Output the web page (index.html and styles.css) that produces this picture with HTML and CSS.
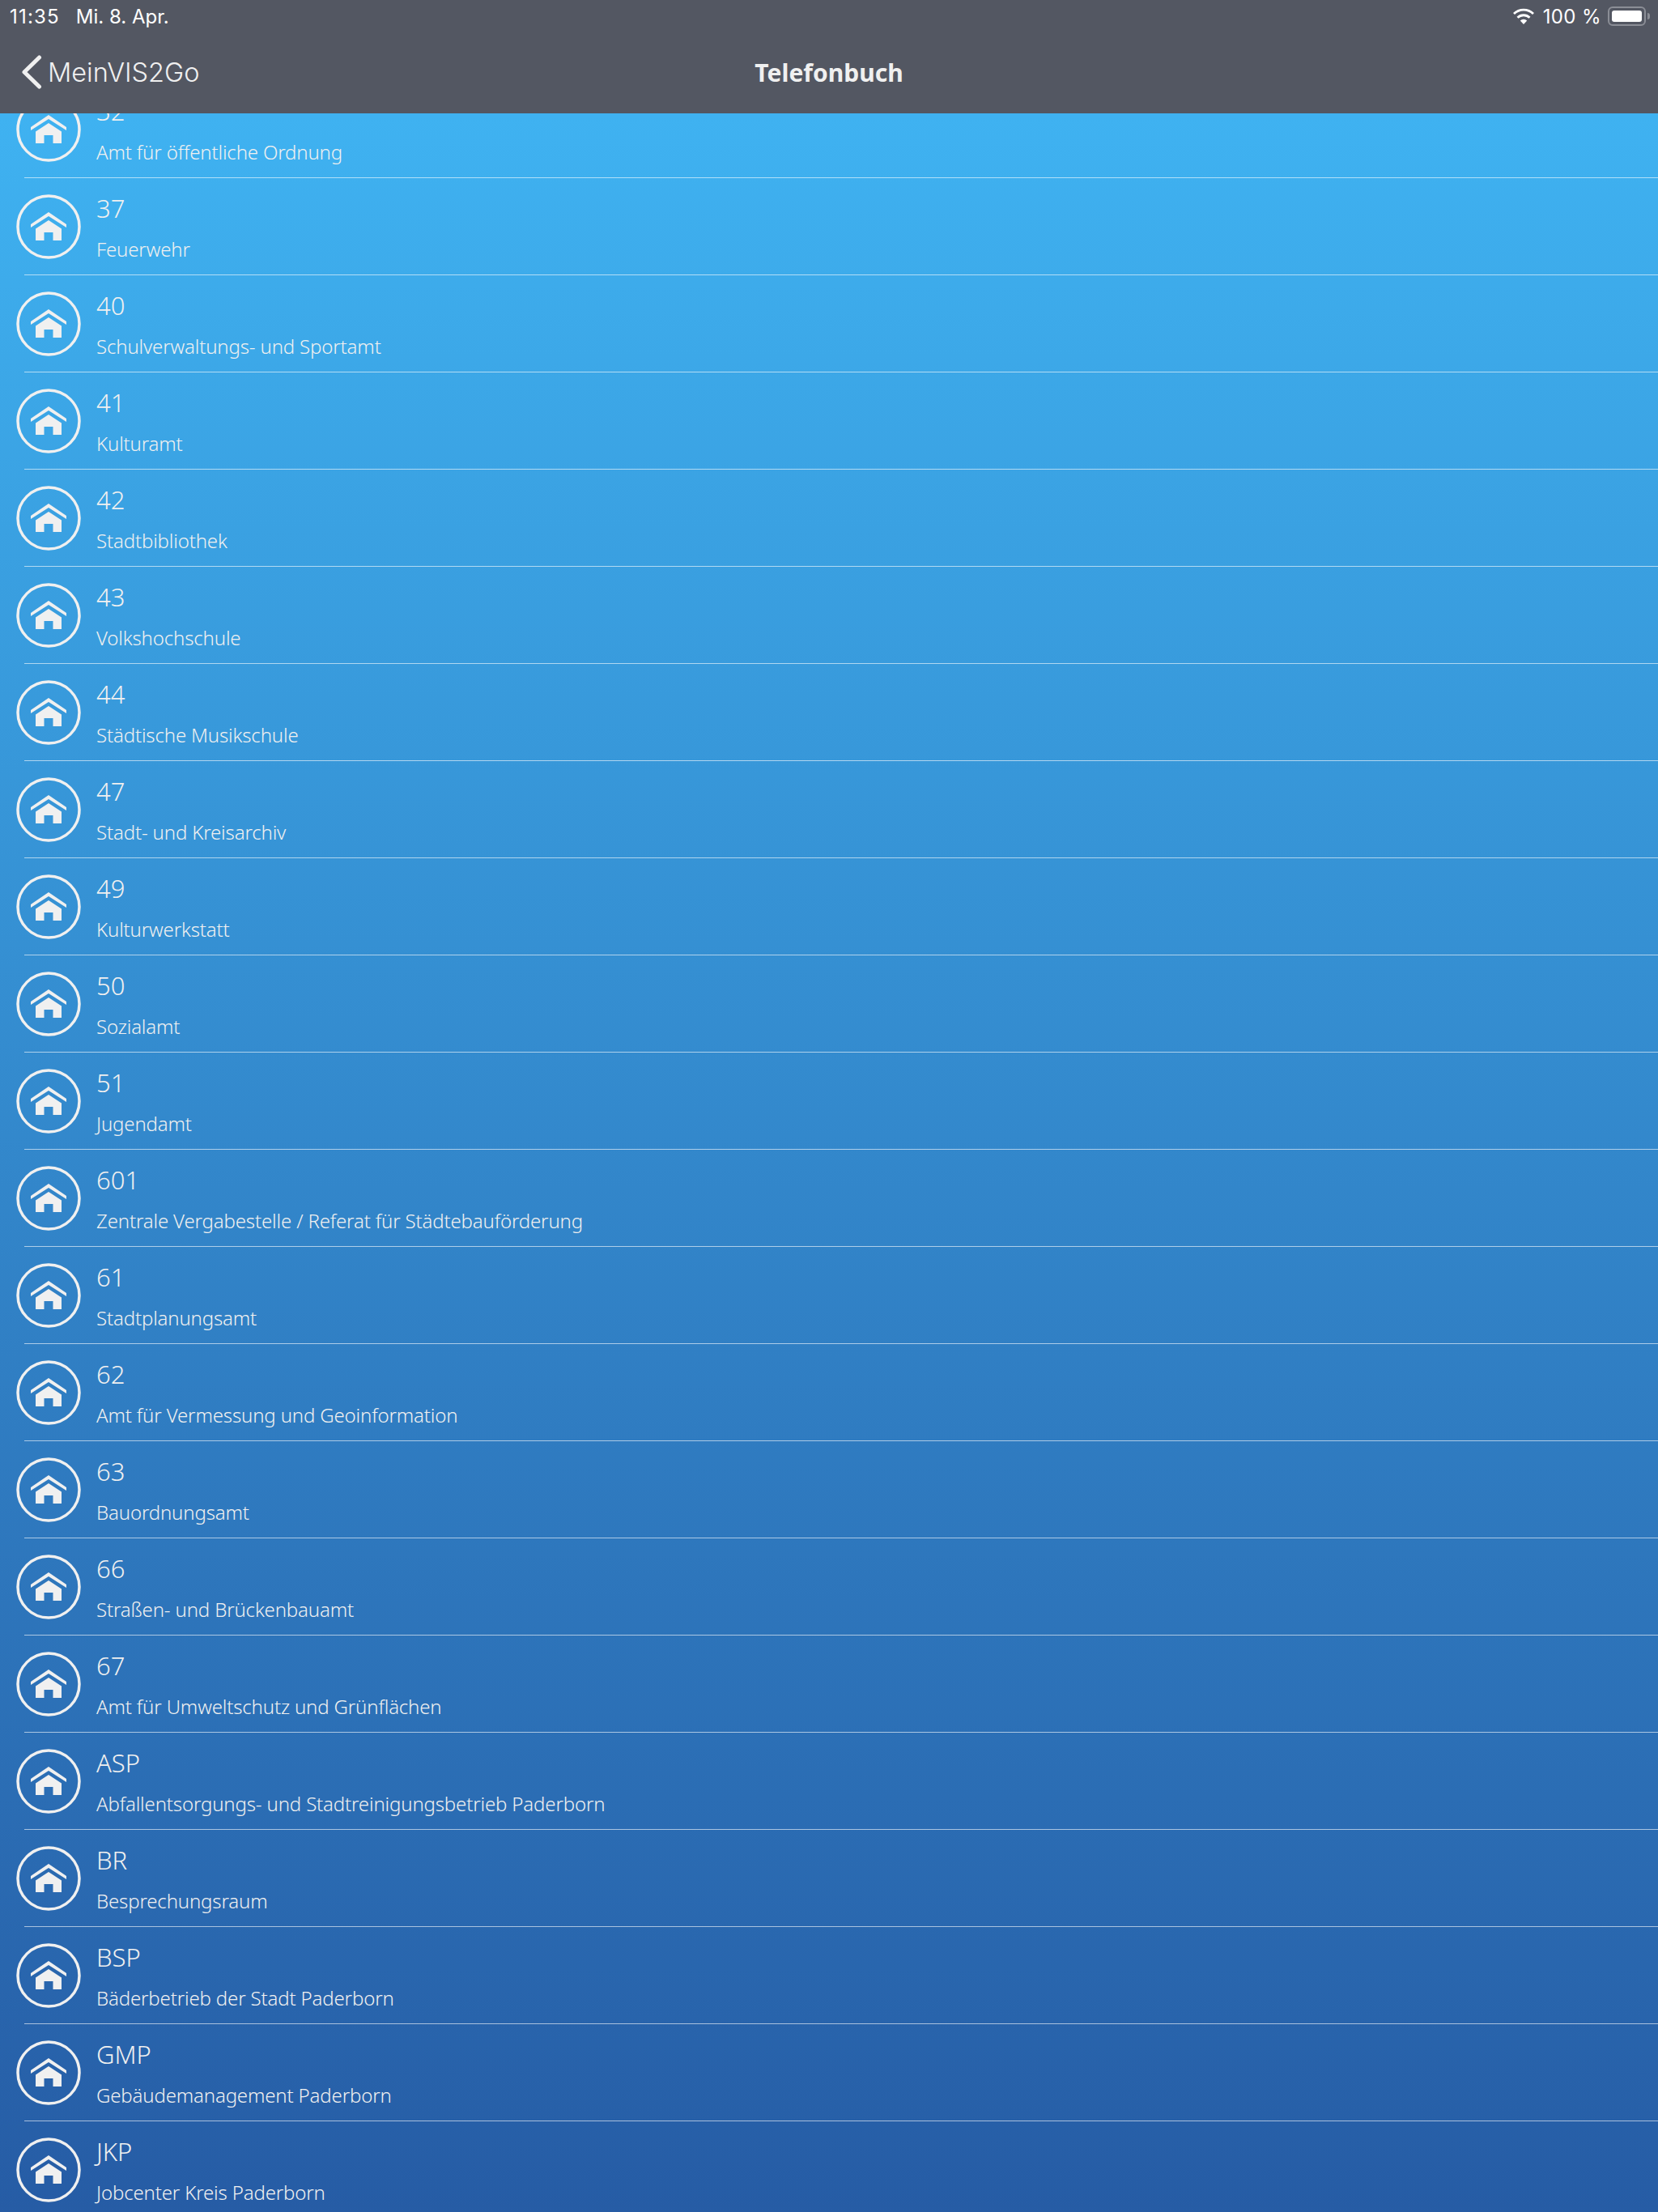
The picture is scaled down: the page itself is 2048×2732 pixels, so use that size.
FILE: index.html
```html
<!DOCTYPE html>
<html lang="de">
<head>
    <meta charset="UTF-8">
    <meta name="viewport" content="width=device-width, initial-scale=1.0">
    <title>Telefonbuch</title>
    <link rel="stylesheet" href="styles.css">
</head>
<body>
    <svg class="icon-defs" width="0" height="0">
        <symbol id="house" viewBox="0 0 80 80">
            <circle cx="40" cy="40" r="38" fill="none" stroke="#f0f0f0" stroke-width="3.500"/>
            <path d="M18 37 L40 22 L62 37 V41 L40 27 L18 41 Z" fill="#f0f0f0"/>
            <path d="M24 42.500 L40 32 L56 42.500 V57 H45.500 V47 H34.500 V57 H24 Z" fill="#f0f0f0"/>
        </symbol>
    </svg>

    <div class="app">
        <div class="top-bar">
            <div class="status-bar">
                <div class="status-left">
                    <span class="status-time">11:35</span>
                    <span>Mi. 8. Apr.</span>
                </div>
                <div class="status-right">
                    <svg class="wifi" viewBox="0 0 28 20">
                        <path d="M14 20 L9.800 15.400 A6 6 0 0 1 18.200 15.400 Z" fill="#fff"/>
                        <path d="M6.500 11.800 A10.800 10.800 0 0 1 21.500 11.800" fill="none" stroke="#fff" stroke-width="2.800"/>
                        <path d="M2 7 A17 17 0 0 1 26 7" fill="none" stroke="#fff" stroke-width="2.800"/>
                    </svg>
                    <span class="status-level">100 %</span>
                    <div class="battery"><div class="battery-level"></div></div>
                    <div class="battery-tip"></div>
                </div>
            </div>
            <div class="nav-bar">
                <div class="nav-back">
                    <svg class="chevron" viewBox="0 0 26 42">
                        <path d="M22.500 3 L4 21 L22.500 39" fill="none" stroke="#f0f0f0" stroke-width="5" stroke-linecap="round" stroke-linejoin="round"/>
                    </svg>
                    <span>MeinVIS2Go</span>
                </div>
                <div class="nav-title">Telefonbuch</div>
            </div>
        </div>

        <div class="content">
            <div id="list" class="phone-list"></div>
        </div>
    </div>

    <script>
        const entries = [
            ["32", "Amt für öffentliche Ordnung"],
            ["37", "Feuerwehr"],
            ["40", "Schulverwaltungs- und Sportamt"],
            ["41", "Kulturamt"],
            ["42", "Stadtbibliothek"],
            ["43", "Volkshochschule"],
            ["44", "Städtische Musikschule"],
            ["47", "Stadt- und Kreisarchiv"],
            ["49", "Kulturwerkstatt"],
            ["50", "Sozialamt"],
            ["51", "Jugendamt"],
            ["601", "Zentrale Vergabestelle / Referat für Städtebauförderung"],
            ["61", "Stadtplanungsamt"],
            ["62", "Amt für Vermessung und Geoinformation"],
            ["63", "Bauordnungsamt"],
            ["66", "Straßen- und Brückenbauamt"],
            ["67", "Amt für Umweltschutz und Grünflächen"],
            ["ASP", "Abfallentsorgungs- und Stadtreinigungsbetrieb Paderborn"],
            ["BR", "Besprechungsraum"],
            ["BSP", "Bäderbetrieb der Stadt Paderborn"],
            ["GMP", "Gebäudemanagement Paderborn"],
            ["JKP", "Jobcenter Kreis Paderborn"]
        ];

        document.getElementById('list').innerHTML = entries.map(entry => `
            <div class="phone-row">
                <svg class="row-icon"><use href="#house"/></svg>
                <div class="row-text">
                    <div class="row-code">${entry[0]}</div>
                    <div class="row-name">${entry[1]}</div>
                </div>
            </div>
        `).join('');
    </script>
</body>
</html>
```

FILE: styles.css
```css
* {
    margin: 0;
    padding: 0;
    box-sizing: border-box;
}

body {
    font-family: "Noto Sans", sans-serif;
    color: #f0f0f0;
    background: #265ca5;
    height: 2732px;
    overflow: hidden;
}

.icon-defs {
    display: block;
    height: 0;
}

.app {
    display: flex;
    flex-direction: column;
    height: 2732px;
}

.top-bar {
    flex: 0 0 140px;
    background: #535762;
}

.status-bar {
    height: 40px;
    padding: 0 10px 0 12px;
    display: flex;
    justify-content: space-between;
    align-items: center;
    font-family: Inter, sans-serif;
    font-size: 24px;
    color: #fff;
}

.status-time {
    letter-spacing: 1.2px;
}

.status-level {
    letter-spacing: 0.4px;
}

.status-left {
    display: flex;
    gap: 20px;
}

.status-right {
    display: flex;
    align-items: center;
}

.wifi {
    width: 28px;
    height: 20px;
    margin-right: 10px;
}

.battery {
    width: 47px;
    height: 24px;
    margin-left: 8px;
    padding: 3px;
    border: 2px solid #8b8e96;
    border-radius: 6px;
}

.battery-level {
    height: 100%;
    background: #fff;
    border-radius: 3px;
}

.battery-tip {
    width: 3px;
    height: 8px;
    margin-left: 2px;
    background: #8b8e96;
    border-radius: 0 3px 3px 0;
}

.nav-bar {
    height: 100px;
    padding: 0 24px 10px 26px;
    display: flex;
    align-items: center;
    position: relative;
}

.nav-back {
    display: flex;
    align-items: center;
    gap: 7px;
    font-family: Inter, sans-serif;
    font-size: 32.500px;
    font-weight: 300;
    margin-top: 8px;
}

.chevron {
    width: 26px;
    height: 42px;
}

.nav-title {
    position: absolute;
    left: 0;
    right: 0;
    top: 29px;
    text-align: center;
    font-size: 30px;
    font-weight: 700;
}

.content {
    flex: 1;
    overflow: hidden;
    background: linear-gradient(180deg, #3fb2f1 0%, #265ca5 100%);
}

.phone-list {
    margin-top: -40px;
}

.phone-row {
    height: 120px;
    padding: 20px 0 0 20px;
    display: flex;
    gap: 19px;
    position: relative;
}

.phone-row::after {
    content: '';
    position: absolute;
    left: 30px;
    right: 0;
    bottom: 0;
    height: 1px;
    background: rgba(255, 255, 255, 0.6);
}

.row-icon {
    width: 80px;
    height: 80px;
    flex: none;
}

.row-code {
    font-size: 31px;
    font-weight: 350;
    line-height: 40px;
    margin-top: -3px;
}

.row-name {
    font-size: 24px;
    font-weight: 350;
    letter-spacing: -0.15px;
    line-height: 36px;
    margin-top: 13px;
}
```
